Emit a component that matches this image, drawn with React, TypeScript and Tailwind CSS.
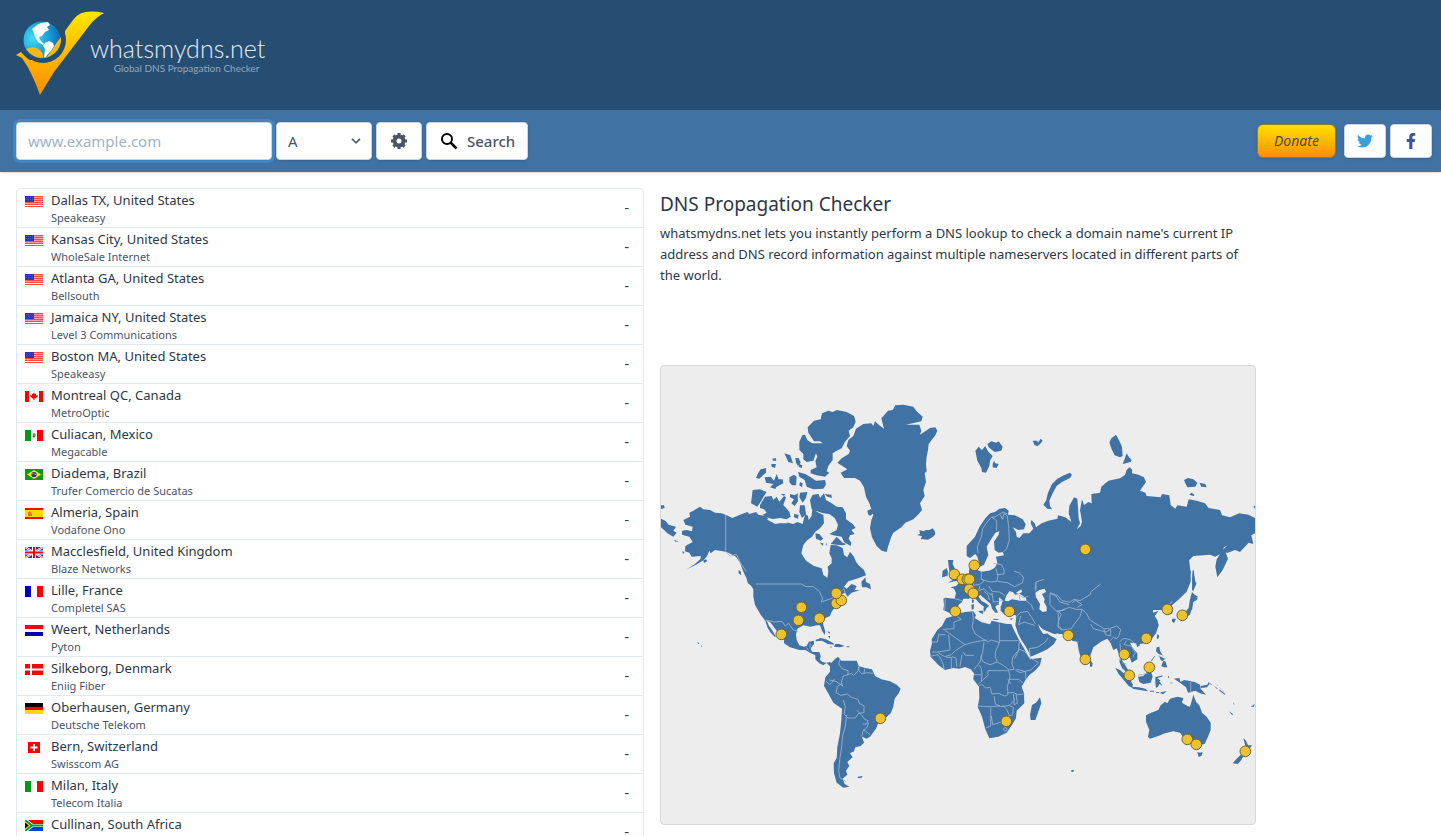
import type { ReactNode } from "react";
import { FaFacebookF, FaTwitter } from "react-icons/fa";

type Server = {
  flag: string;
  place: string;
  provider: string;
};

const servers: Server[] = [
  { flag: "us", place: "Dallas TX, United States", provider: "Speakeasy" },
  { flag: "us", place: "Kansas City, United States", provider: "WholeSale Internet" },
  { flag: "us", place: "Atlanta GA, United States", provider: "Bellsouth" },
  { flag: "us", place: "Jamaica NY, United States", provider: "Level 3 Communications" },
  { flag: "us", place: "Boston MA, United States", provider: "Speakeasy" },
  { flag: "ca", place: "Montreal QC, Canada", provider: "MetroOptic" },
  { flag: "mx", place: "Culiacan, Mexico", provider: "Megacable" },
  { flag: "br", place: "Diadema, Brazil", provider: "Trufer Comercio de Sucatas" },
  { flag: "es", place: "Almeria, Spain", provider: "Vodafone Ono" },
  { flag: "gb", place: "Macclesfield, United Kingdom", provider: "Blaze Networks" },
  { flag: "fr", place: "Lille, France", provider: "Completel SAS" },
  { flag: "nl", place: "Weert, Netherlands", provider: "Pyton" },
  { flag: "dk", place: "Silkeborg, Denmark", provider: "Eniig Fiber" },
  { flag: "de", place: "Oberhausen, Germany", provider: "Deutsche Telekom" },
  { flag: "ch", place: "Bern, Switzerland", provider: "Swisscom AG" },
  { flag: "it", place: "Milan, Italy", provider: "Telecom Italia" },
  { flag: "za", place: "Cullinan, South Africa", provider: "Cybersmart" },
];

const flags: Record<string, ReactNode> = {
  us: (
    <>
      <path fill="#fff" d="M0 0h18v11H0z" />
      <path stroke="#ff4a4a" strokeWidth="1" d="M0 .5h18M0 2.5h18M0 4.5h18M0 6.5h18M0 8.5h18M0 10.5h18" />
      <path fill="#ff9c9c" d="M9 1h9v1H9zM9 3h9v1H9zM9 5h9v1H9zM0 7h18v1H0z" />
      <path fill="#2a35b8" d="M0 0h9v6H0z" />
      <path stroke="#5a66d8" strokeWidth=".6" strokeDasharray="1 1" d="M1 1.5h7M1 3.5h7" />
    </>
  ),
  ca: (
    <>
      <path fill="#fff" d="M0 0h18v11H0z" />
      <path fill="#f00" d="M0 0h4v11H0zM14 0h4v11h-4zM9 1.5l1 1.5 1-.5v2l2-.5-.5 1.5-2 2h-1V9h-1V7.5h-1l-2-2L5 4l2 .5v-2l1 .5z" />
    </>
  ),
  mx: (
    <>
      <path fill="#fff" d="M0 0h18v11H0z" />
      <path fill="#009a17" d="M0 0h6v11H0z" />
      <path fill="#f00" d="M12 0h6v11h-6z" />
      <path fill="#8b8566" d="M8 3.5l2-.5.8 2-.8 2.5H8L7.5 6z" />
      <path fill="#4d6b3a" d="M8 6h2v1H8z" />
    </>
  ),
  br: (
    <>
      <path fill="#099a16" d="M0 0h18v11H0z" />
      <path fill="#ffe500" d="M9 1l7 4.5L9 10 2 5.5z" />
      <circle cx="9" cy="5.5" r="2.6" fill="#1b2f9e" />
      <path stroke="#d8e0f0" strokeWidth=".6" fill="none" d="M6.8 4.8q2-.6 4.4 1" />
    </>
  ),
  es: (
    <>
      <path fill="#ffd900" d="M0 0h18v11H0z" />
      <path fill="#f00" d="M0 0h18v2H0zM0 9h18v2H0z" />
      <path fill="#d9763a" d="M3 4h1v-.5h2V5l1 1v2H3z" />
    </>
  ),
  gb: (
    <>
      <path fill="#2634b5" d="M0 0h18v11H0z" />
      <path stroke="#fff" strokeWidth="2.2" d="M0 0l18 11M18 0L0 11" />
      <path stroke="#f3404a" strokeWidth=".8" d="M0 0l18 11M18 0L0 11" />
      <path fill="#fff" d="M7 0h4v11H7zM0 3.5h18v4H0z" />
      <path fill="#f00" d="M8 0h2v11H8zM0 4.5h18v2H0z" />
    </>
  ),
  fr: (
    <>
      <path fill="#fff" d="M0 0h18v11H0z" />
      <path fill="#0000b5" d="M0 0h6v11H0z" />
      <path fill="#f00" d="M12 0h6v11h-6z" />
    </>
  ),
  nl: (
    <>
      <path fill="#fff" d="M0 0h18v11H0z" />
      <path fill="#f00" d="M0 0h18v4H0z" />
      <path fill="#0000b5" d="M0 7h18v4H0z" />
    </>
  ),
  dk: (
    <>
      <path fill="#f00" d="M0 0h18v11H0z" />
      <path fill="#fff" d="M5 0h2v11H5zM0 4.5h18v2H0z" />
    </>
  ),
  de: (
    <>
      <path fill="#000" d="M0 0h18v4H0z" />
      <path fill="#f00" d="M0 4h18v3H0z" />
      <path fill="#ffd800" d="M0 7h18v4H0z" />
    </>
  ),
  ch: (
    <>
      <path fill="#f00" d="M3 0h12v11H3z" />
      <path fill="#fff" d="M8 2h2v7H8zM5.5 4.5h7v2h-7z" />
    </>
  ),
  it: (
    <>
      <path fill="#fff" d="M0 0h18v11H0z" />
      <path fill="#009a17" d="M0 0h6v11H0z" />
      <path fill="#f00" d="M12 0h6v11h-6z" />
    </>
  ),
  za: (
    <>
      <path fill="#fff" d="M0 0h18v11H0z" />
      <path fill="#f00" d="M3 0h15v4H8z" />
      <path fill="#0b3df0" d="M3 11h15V7H8z" />
      <path stroke="#009a3d" strokeWidth="2" fill="none" d="M0 0l7 5.5h11M0 11l7-5.5" />
      <path fill="#ffc400" d="M0 1.5l5 4-5 4z" />
      <path fill="#000" d="M0 2.5l3.8 3L0 8.5z" />
    </>
  ),
};

const markers = [
  [141, 242], [138, 255], [159, 253], [176, 238], [181, 235], [176, 228],
  [121, 269], [220, 353], [294, 209], [314, 200], [302, 214], [307, 214],
  [309, 214], [309, 224], [313, 228], [295, 246], [349, 246], [425, 184],
  [408, 270], [425, 294], [464, 289], [486, 273], [507, 244], [522, 250],
  [469, 310], [489, 302], [527, 374], [536, 379], [585, 386], [346, 356],
];

function Flag({ code }: { code: string }) {
  return (
    <svg viewBox="0 0 18 11" className="mt-1.5 h-[11px] w-[18px] shrink-0" aria-hidden="true">
      {flags[code]}
    </svg>
  );
}

function LogoMark() {
  return (
    <svg viewBox="0 0 90 86" className="h-[86px] w-[90px]" aria-hidden="true">
      <defs>
        <linearGradient id="tick" x1="0" y1="0" x2="0" y2="1">
          <stop offset="0" stopColor="#ffe600" />
          <stop offset="1" stopColor="#ff8c00" />
        </linearGradient>
        <radialGradient id="sea" cx=".25" cy=".45" r=".75">
          <stop offset="0" stopColor="#45dcf8" />
          <stop offset=".5" stopColor="#1ea8dc" />
          <stop offset="1" stopColor="#0d6ab8" />
        </radialGradient>
      </defs>
      <path
        fill="url(#tick)"
        d="M0 45l5-3q5 6 9 8h13l22-14V21l8-11Q65-2 88 3q-8 4-15 13L54 41 38 62 24 85Q16 62 6 48z"
      />
      <circle cx="27" cy="30" r="23" fill="#264d72" />
      <circle cx="26" cy="30" r="18.5" fill="url(#sea)" />
      <path
        fill="#fff"
        d="M16 19l5-4 4-2 7-1 2 3-3 2 2 3-4 2-3 4-3 1 1 3 4 4-1 1-5-3-3-5-1-4zM29 33l4-2 4 2 1 3-3 5-3 3-3 4-1-1 1-8-2-3z"
      />
      <path fill="#ffb80c" d="M10 39q11-5 17 5v4Q17 48 10 39zM45 27q1 15-15 21 4-5 7-10 4-6 8-11z" />
    </svg>
  );
}

function WorldMap() {
  return (
    <svg viewBox="0 0 1782 1374" className="block h-auto w-full" role="img" aria-label="Map of DNS servers">
      {/* North America, Greenland, Iceland */}
      <g transform="translate(-3 72)" fill="#4172a4">
        <path d="M70 390L90 380 88 368 100 362 120 350 130 358 150 360 165 368 185 370 200 376 217 384 240 374 262 366 268 372 288 366 295 374 318 378 330 392 345 402 375 396 400 402 412 396 428 402 432 385 436 372 444 378 446 390 455 378 456 366 460 345 470 365 490 375 492 400 480 415 466 425 456 440 440 452 430 465 424 490 434 506 440 514 462 528 485 535 490 555 502 563 505 545 503 530 515 520 515 505 508 490 512 465 530 466 548 474 552 495 562 502 570 485 582 500 588 515 595 525 612 540 618 556 590 566 565 574 552 590 560 596 575 582 590 588 584 600 600 600 575 608 562 620 556 608 545 612 545 625 530 645 515 665 510 678 488 688 490 705 496 725 494 735 486 722 480 706 470 706 452 710 430 706 412 716 408 735 410 750 418 766 432 770 440 768 446 755 462 752 462 762 452 775 456 786 478 786 482 798 480 810 488 816 498 818 510 816 516 822 508 828 500 818 490 826 478 820 466 808 466 796 450 788 436 780 418 780 390 772 372 760 372 750 362 740 350 722 332 698 320 690 326 706 336 720 348 740 344 740 332 728 322 712 316 692 302 674 285 645 280 620 280 598 270 582 262 570 250 545 240 518 228 500 212 492 200 486 180 482 165 480 152 490 148 482 140 500 128 512 108 524 80 538 105 522 122 506 122 498 95 500 88 488 75 484 76 468 98 456 88 440 66 434 66 422 80 420 96 424 98 410 76 404z" />
        <path d="M3 386L16 392 26 404 48 410 40 422 50 428 40 440 22 430 12 420 3 412zM3 346L12 346 14 354 3 357zM42 450l14 4-10 1zM66 484l8 2-4 6zM130 510l8-2 4 6-10 5zM236 540l6 4 2 12-8-6zM260 568L278 574 288 584 288 598 278 590 264 580zM606 592L604 576 616 562 618 576 630 582 633 598 620 592z" />
        <path d="M443 112L462 92 482 88 486 70 505 62 518 66 530 60 560 66 582 78 587 95 580 112 566 122 570 138 555 155 545 175 530 182 518 190 518 210 505 228 500 244 508 248 495 260 470 256 452 250 452 240 470 232 466 212 472 200 464 180 456 160 488 160 480 154 462 154 445 128zM427 136L435 134 442 150 460 162 468 190 460 212 440 216 430 208 430 192 418 180 418 155zM664 85L684 62 698 60 706 46 730 44 760 50 770 64 788 80 784 94 738 104 778 104 784 122 780 134 810 114 826 112 832 122 826 136 806 162 804 180 800 200 798 222 800 244 794 250 798 275 790 300 794 318 780 340 786 360 776 372 760 388 736 398 724 412 700 428 694 440 684 470 680 486 665 482 650 468 636 442 630 415 634 390 640 375 628 340 618 320 612 292 600 272 585 264 552 264 542 248 562 238 532 218 545 205 566 192 570 182 560 168 565 150 580 138 588 116 610 102 634 100 640 108 645 94 656 104 672 116z" />
        <path d="M273 340L278 300 300 298 320 306 312 318 304 332 292 350zM300 345L315 320 335 318 340 330 350 320 358 335 372 318 378 322 370 345 388 365 392 380 380 388 360 384 340 388 320 382 308 374 320 368 312 358 300 354zM288 264l6-14 8-12 16-4 0 14-14 12-6 6zM314 262L332 260 342 272 350 252 356 268 368 268 370 280 350 290 346 297 330 292 340 282 318 278zM373 190l18 6 8 24-14-4zM337 206l10-2 2 8-10 0zM334 222l14 0-3 12-10-4zM388 262L402 254 410 260 408 286 396 286 388 276zM406 204l10 0 6 14-8 10-6-10zM417 222l10 4-2 8-9-3zM414 246L436 252 452 262 468 272 495 270 498 284 490 296 460 298 440 290 434 270 418 260zM420 276l8 4-2 12-8-6zM390 312L404 316 413 310 414 334 404 348 394 340 402 328 390 322zM420 308L442 306 438 324 428 338 418 322zM420 346L434 346 438 372 426 384 418 366zM402 372l14 2-2 12-12-4zM362 312l14 0-4 6zM450 330L458 314 476 312 480 324 492 310 498 330 515 340 530 350 548 352 558 370 558 388 578 402 587 414 574 420 584 432 570 436 566 446 574 458 572 468 552 456 545 440 520 436 508 432 530 420 534 404 524 384 508 372 490 370 478 366 455 358zM494 312l20 2 2 10-14-4zM466 430L478 432 490 446 482 452 468 446zM480 458l10 2-2 8zM498 456l4 10-3 0zM512 462L530 440 548 458 560 462 550 466 530 464z" />
        <path d="M778 420l12 4 8-4 10 0 10-5 6 8 2 10-8 8-14 8-22-2 4-8-14-4 8-4zM622 362l12-6 6 14-10 8-6-6z" />
        <path fill="#ededed" d="M510 396l12 0-2 12-9-2zM320 388L350 386 380 396 384 400 350 400 330 394z" />
      </g>
      <g transform="translate(-3 72)" fill="none" stroke="#9db6cf" strokeWidth="2.5" strokeLinejoin="round">
        <path d="M197 375v110l14 14 18-6 14 28 16 24M288 582h136l14 8h22l18 14 10 22-4 10 34-12 20-16 14-12 4 16M318 690l26 6 22-2 10 14 10-8 14 20 14 4" />
      </g>

      {/* Central and South America */}
      <g transform="translate(237 582)" fill="#4172a4">
        <path d="M270 312L285 297 294 290 304 302 350 302 356 318 376 324 396 328 405 348 424 358 450 364 470 374 482 386 476 400 464 416 460 440 452 460 436 475 416 485 408 506 390 530 380 536 366 530 372 548 362 558 346 562 342 574 330 580 338 592 322 606 328 618 318 632 322 644 308 656 314 672 328 680 310 683 290 668 282 640 281 610 290 594 292 560 300 520 304 480 306 446 280 428 266 402 252 378 256 352 270 335z" />
        <path d="M226 240L242 234 258 238 278 248 284 254 264 252 246 242 228 244zM286 252l12 0 16 6-14 4-18-2zM268 260l8 0-2 3zM320 259h8v3h-8zM262 214l8 2-2 6zM264 228l6 0 0 8zM354 650l14-2-4 6-12 0z" />
        <g fill="none" stroke="#9db6cf" strokeWidth="2.5" strokeLinejoin="round">
          <path d="M300 298l-4 14 10 14 18 6 0 12-14 4-6 18 4 12-20-14-20-4M322 344l12-4 6 6 14-12 2-14M358 318l-2 14 10 10 14-4 20 2M374 326l-2 14M258 364l12 10 14-18M306 370l-14 10-4 18 14 8 20-4 12 10 20 6 4 12 14 8 0 20-16 2-10 14-22 0-12-12 4-22-6-20M350 450l14 14 10 14 10 4-4 10-12 0M386 488l-6 16-12 10-2 16M370 508l20 16M320 464l-4 34-8 30-4 40-4 24-4 40 4 22 18 10M200 262l6 10M210 248l0 14" />
        </g>
      </g>

      {/* Scandinavia and Russia */}
      <g transform="translate(777 72)" fill="#4172a4">
        <path d="M140 468L165 440 178 412 196 385 210 370 225 366 238 356 255 354 266 362 264 374 285 376 308 388 317 402 312 418 295 420 278 412 288 426 290 440 298 444 310 430 328 430 340 416 332 400 334 390 344 400 348 412 365 400 385 392 412 386 414 376 436 382 454 396 446 370 448 348 462 322 472 326 474 350 476 385 480 400 470 418 482 408 486 395 480 360 486 328 492 345 505 336 515 340 514 312 540 308 544 290 565 272 600 265 615 255 620 240 628 232 636 238 636 250 655 254 672 262 678 276 660 302 676 308 680 318 722 322 726 312 748 316 752 345 766 356 772 346 800 350 806 328 830 332 855 340 866 354 900 360 906 376 930 382 958 370 985 374 1005 384 1005 430 994 436 1000 462 986 458 960 486 945 480 920 490 924 466 912 472 906 490 885 500 870 494 820 498 800 518 785 535 800 542 812 542 812 575 800 605 780 625 740 660 330 660 310 610 160 600 148 560 150 525 160 512 170 512 172 540 185 545 220 540 232 520 228 500 252 496 248 486 236 488 224 480 222 455 236 434 238 424 226 428 212 450 200 470 205 495 192 524 180 530 172 500 166 492 150 504 140 498z" />
        <path d="M166 182L176 170 186 180 196 168 204 184 218 198 210 212 208 228 198 248 186 246 184 234 172 212zM202 162L214 154 228 158 236 154 248 170 244 182 224 186 206 172zM218 222l4-10 4 8 10 2-6 12-12-2zM338 152l14 0 2 6 8-12 6 6-6 8-8 8-10-2zM568 158L574 145 588 134 598 152 606 170 608 198 600 202 584 196 576 180zM608 222L614 206 620 190 626 200 635 210 632 216zM792 270l12-6 16 4 12 10-6 12-24 2-6-12zM838 278l18 4 4 10-16-2zM808 314l6-6 10 6-4 4zM370 344L378 332 384 308 396 282 412 266 432 256 450 248 456 254 450 264 426 276 410 288 398 310 388 332 390 348 396 358 382 356zM924 464L926 475 918 490 924 506 908 540 892 562 886 530 890 508 908 480zM1000 350l6-4 0 12zM819 542L822 552 826 575 830 580 820 592 820 604 816 600 817 572zM814 620l8-2 4 6 8-2-4 8-10 6-4 24-6 0 2-24z" />
        <g fill="none" stroke="#9db6cf" strokeWidth="2.5" strokeLinejoin="round">
          <path d="M174 490L172 470 184 440 188 416 200 398 214 382 226 380 250 366 262 372M216 382L230 392 230 422M240 374L248 388 252 370 262 378 266 410 268 450 260 476 248 488M346 604L346 580 366 568 396 572 414 568 416 550 436 542 460 532 478 544 496 538 516 562 536 564 552 580 538 602 516 610 512 628 482 638M396 610L416 634 440 632 446 646 462 642 474 662M548 580L564 568 598 572 604 560 622 570 672 570 696 576 706 590 682 592 668 608 642 618 636 634 606 628 576 624 560 612 556 592zM694 588L708 570 710 554 726 546 738 558 742 580 756 590 780 592 776 614 762 626" />
        </g>
      </g>

      {/* South and East Asia, Oceania */}
      <g transform="translate(1167 582)" fill="#4172a4">
        <path d="M-40 -20L415 -20 422 40 412 70 398 94 378 114 362 126 366 142 368 160 354 166 346 156 344 140 330 132 318 146 308 148 310 158 326 152 314 168 322 180 326 196 318 220 300 244 284 250 268 252 262 262 258 250 240 248 248 264 262 280 262 298 245 308 240 294 226 282 218 284 216 300 226 316 238 336 232 340 216 324 208 305 210 290 200 265 190 270 182 250 172 236 155 244 130 262 122 284 118 300 105 314 94 300 86 270 82 245 66 242 58 230 34 224 10 216-40 214z" />
        <path d="M120 300l8 10-2 10-6 0zM196 324L210 330 224 342 238 356 248 372 248 384 236 378 218 356 206 342zM246 380l20 2 20 4 8 8-24-4-22-4zM300 392h12v3h-12zM318 396l10 0-2 3-8-1zM334 396l16-2-10 8-10-2zM264 350L280 348 292 334 304 338 308 350 302 368 280 372 268 366zM316 352l22-6-2 4-14 4 10 8-4 2 10 14-10-6-4 8-6 4-2-16zM340 302l6 2 6 18-10 0-8-4zM320 262l8-2 2 12 8 14-12-4-8-8zM328 288l12 6 6 2-10 8-6-8zM316 288l-12 16-2-2 12-14zM262 252l8 0-2 6-6 2zM322 222l6 6-4 10-4-4zM356 346l2 10-4-4zM372 356L388 354 392 366 402 360 416 362 434 366 450 374 452 386 468 404 450 400 436 392 414 398 408 382 392 370zM360 368h8v2h-8zM452 378l20-4 4-8 3 6-8 10-18 2zM476 366l10 8-2 2zM490 376l14 10-3 1zM508 388l18 14-2 2-16-12zM537 454l12 8-2 4zM550 426l4 8-3-1zM602 440l12-8-2 8zM428 30L432 32 433 60 438 74 430 92 428 84 426 60zM426 96L434 104 444 110 430 118 424 130 426 144 420 164 408 172 396 174 382 172 386 166 402 160 416 144 420 118zM366 176l12 0-6 14-6-6z" />
        <path d="M288 466L300 460 325 450 332 436 345 425 352 430 360 416 382 410 400 414 396 428 412 438 420 440 426 420 430 404 438 425 448 436 456 458 470 470 482 488 482 510 474 530 464 552 448 555 428 548 415 530 400 532 390 518 370 514 345 520 325 528 300 536 294 530 298 510 288 485zM442 576l8 2 8-2-4 12-8 3zM580 534L588 542 594 556 606 556 598 568 588 576 586 558zM572 584l8 4-6 12-10 12-16-2 12-14zM64 630l8 0-2 6-6-1z" />
        <g fill="none" stroke="#9db6cf" strokeWidth="2.5" strokeLinejoin="round">
          <path d="M0 98L22 106 36 122 60 126 72 118 90 122 120 104 124 94 152 72M0 148L26 154 58 142 78 148 96 148 90 170 76 188 64 206 36 210 24 202 26 180 34 164 24 152M96 148L110 160 118 178 132 188 162 206 178 206 200 198 212 208 208 224 200 236 190 232 180 242M66 130L76 120 96 134 82 142M122 192L130 206 168 216 182 208 182 228 166 224 162 208M208 246L220 236 230 236 242 240 256 252M210 250L212 274 216 286M230 242L222 254 244 258 256 278 248 292M208 306l8-20M264 346l28-6M422 364v34M356 136l10-12M216 308l14 4" />
          <path d="M324 288l18 0 4 10M500 374l26 26" strokeDasharray="5 7" />
        </g>
      </g>

      {/* Africa, Arabia, Mediterranean Europe */}
      <g transform="translate(747 582)" fill="#4172a4">
        <path d="M135 163L165 156 190 154 198 165 194 174 215 187 240 193 245 182 265 187 290 192 304 192 310 206 318 222 330 245 340 262 350 280 360 298 395 293 390 315 375 332 358 345 345 362 335 380 342 400 343 430 320 452 318 475 304 498 290 518 265 530 238 535 226 508 216 470 203 440 208 415 207 380 190 358 192 340 182 328 165 321 148 326 130 324 105 330 85 315 62 290 60 272 66 250 65 238 82 210 96 198 108 175 130 168zM390 412L394 430 386 452 376 480 362 480 360 464 366 435 378 428z" />
        <path d="M316 196L320 160 345 150 372 168 386 192 396 208 402 222 412 220 424 228 440 237 432 252 412 268 390 278 362 290 356 276 346 258 334 240 324 220zM272 138L286 126 305 122 326 118 350 122 372 116 440 150 440 226 424 222 412 214 398 206 388 192 370 190 318 196 320 176 316 164 300 168 284 164 272 152z" />
        <path d="M275 135L262 134 256 140 264 158 256 158 246 146 242 132 226 118 210 104 206 110 214 122 228 130 238 138 230 144 224 156 220 150 222 140 208 130 196 116 186 110 176 116 160 116 156 126 146 134 142 150 134 162 120 160 108 154 100 150 102 134 100 116 106 113 134 116 138 98 132 86 122 82 138 78 150 66 168 60 176 46 178 28 186 6 194 8 196 36 212 42 232 36 260 20 370 20 366 110 350 124 310 124z" />
        <path d="M114 0L130 0 128 12 134 24 144 44 150 54 142 62 114 68 128 60 118 54 126 42 118 32 116 18zM98 32l12-8 4 12-2 12-16 4zM186 118l6 2-2 10-4-2zM184 134l8-1-1 14-6 2zM206 152l14 0-1 10-13-6zM250 176l16 2-2 3-14-2zM298 176l12-1-6 5z" />
        <path fill="#ededed" d="M284 122L288 108 298 94 308 96 316 104 330 102 348 114 350 122 330 122 306 118 294 124zM318 98l16-10 2 8-10 6zM376 98L388 90 404 86 408 96 396 102 404 118 402 126 410 140 410 154 398 156 388 148 390 132 378 112zM384 192L396 206 408 212 418 216 432 222 460 222 460 232 440 236 420 226 408 216 400 222 390 208zM268 112l10 10-4 14-8-2z" />
        <g fill="none" stroke="#9db6cf" strokeWidth="2.5" strokeLinejoin="round">
          <path d="M98 208L132 206 132 186 154 178 136 166M188 156L190 182 186 200 196 222 234 246 244 240 268 248 268 190M268 242L326 242M104 210L165 254 192 246 230 240M64 246L82 246 86 224 106 224M116 224L120 270 84 276 66 276M64 288L84 284 92 296 100 314 102 328M84 278L104 290 124 284 136 272 164 254M108 292L124 292 124 324M126 290L138 294 140 320M156 284L150 320M192 286L166 286 160 276M216 286L210 306 192 328M222 246L218 278 212 292 220 306 240 314 262 306 256 292 256 276 268 248M262 306L280 316 298 330 312 328 306 312 308 292 326 270 328 242M314 296L328 268 344 274 358 292 386 308 362 330 344 334 320 328M316 330L330 338 346 334 348 360M192 344L216 344 214 326 208 316M216 344L214 364 204 374M214 364L234 346 234 332 264 332 296 332 300 350 292 380 294 404 284 408 266 400 246 402 240 382 226 384 218 374 208 376M298 358L326 358 338 368M294 358L302 372M292 398L312 398 322 404 344 402M204 438L240 440 270 438M252 408L256 432 274 440 298 436 312 422 310 402M242 442L242 498 228 504M244 468L248 494 268 488 282 488 298 466 290 448 278 436M298 436L310 442 308 464 294 470M318 400L322 430 312 434 312 414M280 506l8-4 4 8-8 4z" />
          <path d="M106 116L104 150M134 116L156 122M186 62L192 76 176 86 182 108M192 76L212 72 222 62 214 58 214 36M214 58L242 66 260 64 264 50 258 26M250 10L274 14 282 28 282 42 260 44M262 64L292 68 314 80 338 68 340 52 328 38 312 34M210 78L206 92 222 86 236 100 246 104M236 78L246 94 268 96 284 106M246 98L250 126 268 124 280 120M222 94L234 104 238 120M330 122L328 106 342 114 354 108M350 124L364 134 370 150M318 172L330 158 352 154 364 170 376 192M332 168L326 194 342 186 374 196M360 286L358 266 382 262 404 248 414 234M378 88L378 66 402 58M420 100L420 134 440 154 464 150M420 100L438 108 450 126 478 134M444 156L446 182 444 196 456 208" />
        </g>
      </g>

      <path fill="#4172a4" d="M108 828l8 4-4 2zM120 838l4 3-3 1z" />
      <g fill="#ecc22f" stroke="#75622b" strokeWidth="3">
        {markers.map(([x, y]) => (
          <circle key={`${x}-${y}`} cx={x * 3 - 2} cy={y * 3 - 2} r="16" />
        ))}
      </g>
    </svg>
  );
}

export default function App() {
  const control = "rounded border border-[#cbd5e0] bg-white shadow-sm";

  return (
    <div className="min-h-screen bg-white font-['Noto_Sans','Open_Sans',sans-serif] text-[#2d3748]">
      <header className="h-[110px] bg-[#264d72] px-4 pt-[10px]">
        <a href="#home" className="flex w-fit font-['Lato',sans-serif] text-[#e6eef5]">
          <LogoMark />
          <span className="-ml-4 flex flex-col items-end pt-6">
            <span className="text-[25px] font-light leading-7">whatsmydns.net</span>
            <span className="pr-1.5 text-[10px] leading-3 text-[#8fa9c1]">Global DNS Propagation Checker</span>
          </span>
        </a>
      </header>

      <div className="flex items-center justify-between bg-[#4172a4] py-3 pl-4 pr-[9px] shadow">
        <form className="flex gap-1" onSubmit={(event) => event.preventDefault()}>
          <input
            type="text"
            aria-label="Domain name"
            placeholder="www.example.com"
            className="h-[38px] w-64 rounded border border-[#cbd5e0] bg-white px-[11px] text-[15px] shadow-[0_0_0_3px_rgba(66,153,225,0.5)] outline-none placeholder:text-[#a0b3c8]"
          />
          <div className="relative">
            <select aria-label="Record type" className={`${control} h-[38px] w-24 appearance-none px-[11px] text-[15px] text-[#4a5568]`}>
              <option>A</option>
              <option>AAAA</option>
              <option>CNAME</option>
              <option>MX</option>
            </select>
            <svg viewBox="0 0 20 20" className="pointer-events-none absolute right-2 top-[11px] h-4 w-4 fill-[#4a5568]" aria-hidden="true">
              <path d="M9.293 12.95l.707.707L15.657 8l-1.414-1.414L10 10.828 5.757 6.586 4.343 8z" />
            </svg>
          </div>
          <button type="button" aria-label="Options" className={`${control} flex h-[38px] w-[46px] items-center justify-center`}>
            <svg viewBox="0 0 16 16" className="h-4 w-4" aria-hidden="true">
              <circle cx="8" cy="8" r="4.5" fill="none" stroke="#4a5568" strokeWidth="4" />
              <path
                stroke="#4a5568"
                strokeWidth="3"
                d="M8 0v3M8 13v3M0 8h3M13 8h3M2.4 2.4l2 2M11.600 11.600l2 2M13.600 2.4l-2 2M4.400 11.600l-2 2"
              />
            </svg>
          </button>
          <button type="submit" className={`${control} flex h-[38px] items-center gap-2 px-3 text-[15px] font-medium text-[#4a5568]`}>
            <svg viewBox="0 0 20 20" className="h-5 w-5 fill-none stroke-black stroke-2" aria-hidden="true">
              <circle cx="8" cy="8" r="5" />
              <path d="M11.5 11.5l6 6" strokeWidth="2.5" />
            </svg>
            Search
          </button>
        </form>
        <div className="flex items-center gap-1">
          <button
            type="button"
            className="mr-1 h-[34px] w-[79px] rounded-md border border-[#8a7a4a] bg-linear-to-b from-[#ffdf00] to-[#ff8f00] text-sm italic text-[#4a4a4a] shadow"
          >
            Donate
          </button>
          <a href="#twitter" aria-label="Twitter" className={`${control} flex h-[34px] w-[42px] items-center justify-center text-[#38a1db]`}>
            <FaTwitter className="h-4 w-4" />
          </a>
          <a href="#facebook" aria-label="Facebook" className={`${control} flex h-[34px] w-[42px] items-center justify-center text-[#3a559f]`}>
            <FaFacebookF className="h-4 w-4" />
          </a>
        </div>
      </div>

      <div className="flex p-4">
        <main className="grid min-w-0 flex-1 grid-cols-2 items-start">
          <ul className="rounded border border-[#e2e8f0]">
            {servers.map((server) => (
              <li
                key={server.place}
                className="flex items-start border-b border-[#e2e8f0] px-2 py-[1px] last:border-b-0"
              >
                <Flag code={server.flag} />
                <div className="ml-2 flex-1">
                  <p className="text-[13px] leading-5">{server.place}</p>
                  <p className="text-[11px] leading-4 text-[#4a5568]">{server.provider}</p>
                </div>
                <span className="self-center pr-1.5 text-sm">-</span>
              </li>
            ))}
          </ul>

          <section className="px-4">
            <h1 className="text-[19px] leading-8">DNS Propagation Checker</h1>
            <p className="mt-[3px] text-[13px] leading-[21px]">
              whatsmydns.net lets you instantly perform a DNS lookup to check a domain name's current IP address and DNS
              record information against multiple nameservers located in different parts of the world.
            </p>
            <div className="mt-[79px] overflow-hidden rounded border border-[#d8d8d8] bg-[#ededed]">
              <WorldMap />
            </div>
          </section>
        </main>
        <aside className="w-[153px] shrink-0" />
      </div>
    </div>
  );
}
